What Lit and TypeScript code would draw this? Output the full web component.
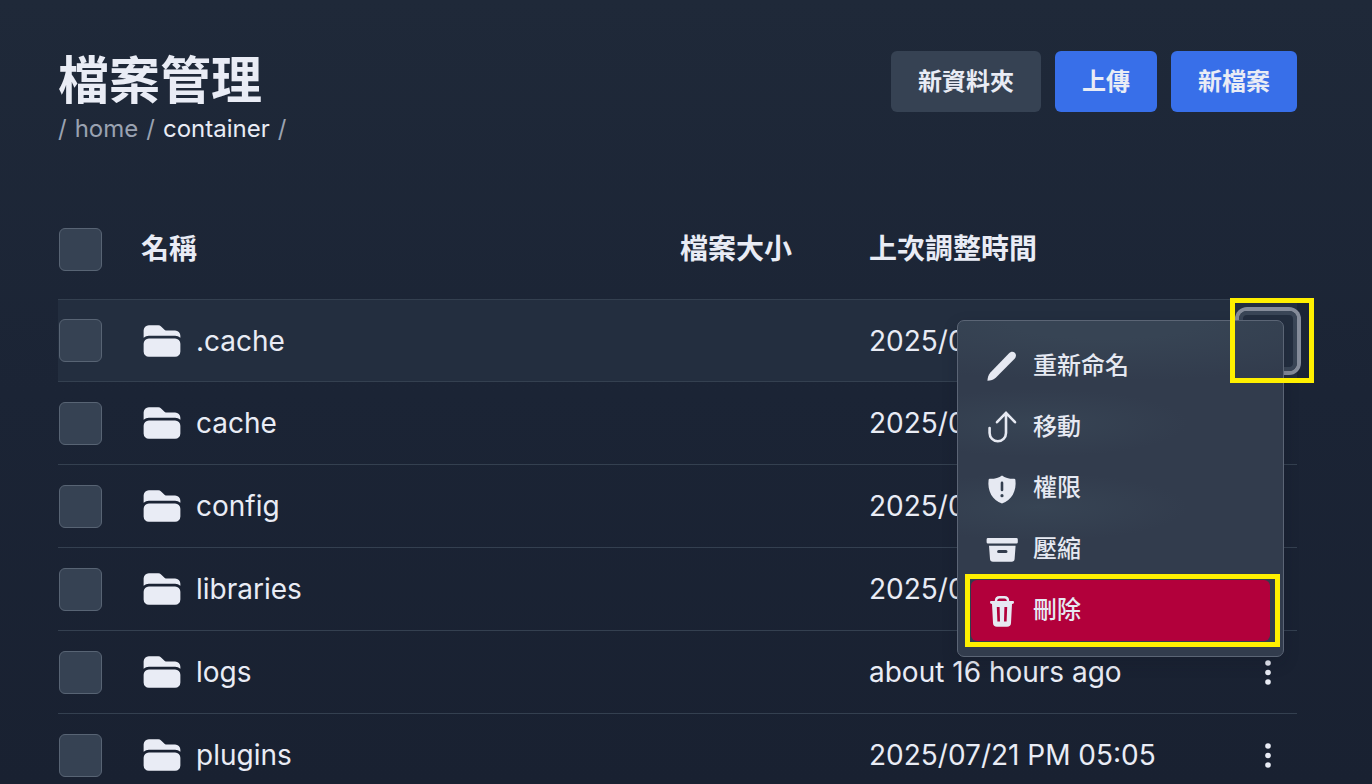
import { LitElement, html, css, svg } from "lit";
import { customElement, property } from "lit/decorators.js";
import { classMap } from "lit/directives/class-map.js";

interface FileEntry {
  name: string;
  size: string;
  modified: string;
}

interface MenuEntry {
  icon: string;
  label: string;
  danger?: boolean;
}

const FILES: FileEntry[] = [
  { name: ".cache", size: "", modified: "2025/0" },
  { name: "cache", size: "", modified: "2025/0" },
  { name: "config", size: "", modified: "2025/0" },
  { name: "libraries", size: "", modified: "2025/0" },
  { name: "logs", size: "", modified: "about 16 hours ago" },
  { name: "plugins", size: "", modified: "2025/07/21 PM 05:05" },
];

const MENU: MenuEntry[] = [
  { icon: "pencil", label: "重新命名" },
  { icon: "move", label: "移動" },
  { icon: "shield", label: "權限" },
  { icon: "archive", label: "壓縮" },
  { icon: "trash", label: "刪除", danger: true },
];

const GLYPHS: Record<string, unknown> = {
  pencil: svg`<path fill="currentColor" d="M3.4 31.8C3.6 28.8 4.2 25.8 6.4 23.4L24.8 4.4C26.8 2.4 29.2 2.4 30.8 3.8C32.4 5.4 32.4 7.8 30.6 9.8L12 28.4C9.6 30.6 6.6 31.6 3.4 31.8Z"/>`,
  move: svg`<path fill="none" stroke="currentColor" stroke-width="2.6" stroke-linecap="round" stroke-linejoin="round" d="M13 12.2L22 2.8L31 12.2M22 2.8V23A8.2 8.2 0 0 1 5.6 23V18"/>`,
  shield: svg`<path fill="currentColor" fill-rule="evenodd" d="M18 4.4C21 6.6 25.6 8 30.2 7.8Q31.2 7.8 31.4 8.8C32.8 20 27.6 29.4 18 32.4C8.4 29.4 3.2 20 4.6 8.8Q4.8 7.8 5.8 7.8C10.4 8 15 6.6 18 4.4ZM18 10.6A1.3 1.3 0 0 0 16.7 11.9V19A1.3 1.3 0 0 0 19.3 19V11.9A1.3 1.3 0 0 0 18 10.6ZM18 23.1A1.6 1.6 0 1 0 18 26.3A1.6 1.6 0 1 0 18 23.1Z"/>`,
  archive: svg`<path fill="currentColor" fill-rule="evenodd" d="M4 6H32.4Q33.8 6 33.8 7.4V10.2Q33.8 11.6 32.4 11.6H4Q2.6 11.6 2.6 10.2V7.4Q2.6 6 4 6ZM5 13.8H31.6L30.6 27Q30.4 29.8 27.6 29.8H9Q6.2 29.8 6 27ZM14.6 18A1.5 1.5 0 0 0 14.6 21H22A1.5 1.5 0 0 0 22 18Z"/>`,
  trash: svg`<path fill="none" stroke="currentColor" stroke-width="2.4" d="M12 9V8Q12 4.2 15.6 4.2H20.4Q24 4.2 24 8V9"/><path fill="currentColor" fill-rule="evenodd" d="M7 8H29Q30 8 30 9.2Q30 10.6 29 10.8L28 11L27 30Q26.8 33.8 23 33.8H13Q9.2 33.8 9 30L8 11L7 10.8Q6 10.6 6 9.2Q6 8 7 8ZM12.8 14L13.4 28.6H16L15.6 14ZM20.4 14L20 28.6H22.6L23.2 14Z"/>`,
};

@customElement("action-icon")
class ActionIcon extends LitElement {
  @property() name = "";

  static styles = css`
    :host {
      display: flex;
      flex: none;
    }
    .glyph {
      width: 35px;
      height: 35px;
    }
  `;

  render() {
    return html`<svg class="glyph" viewBox="0 0 35 35" aria-hidden="true">${GLYPHS[this.name]}</svg>`;
  }
}

@customElement("context-menu")
class ContextMenu extends LitElement {
  static styles = css`
    :host {
      display: block;
      box-sizing: border-box;
      width: 327px;
      padding: 15px 13px;
      border: 1px solid #5b6575;
      border-radius: 7px;
      background:
        radial-gradient(ellipse 320px 60px at 45% 0, #374454 30%, transparent),
        radial-gradient(ellipse 150px 34px at 80px 102px, #374454, transparent),
        radial-gradient(ellipse 150px 34px at 80px 186px, #374454, transparent),
        #323c4d;
      box-shadow: 0 6px 16px rgba(14, 20, 34, 0.2);
    }
    .item {
      display: flex;
      align-items: center;
      gap: 14px;
      width: 100%;
      height: 61px;
      padding: 0 13px;
      border: 0;
      border-radius: 6px;
      background: none;
      color: #e6e9f2;
      font: 500 24px/32px Inter, "Noto Sans CJK TC", sans-serif;
      text-align: left;
      cursor: pointer;
    }
    .danger {
      background: #b2003b;
    }
    .wrap {
      position: relative;
    }
    .mark {
      position: absolute;
      inset: -6px -10px -6px -6px;
      border: 5px solid #fff000;
      pointer-events: none;
    }
  `;

  render() {
    return html`<div role="menu">
      ${MENU.map(
        (m) => html`<div class="wrap">
          <button type="button" role="menuitem" class=${classMap({ item: true, danger: !!m.danger })}>
            <action-icon name=${m.icon}></action-icon>
            <span>${m.label}</span>
          </button>
          ${m.danger ? html`<span class="mark"></span>` : ""}
        </div>`
      )}
    </div>`;
  }
}

@customElement("app-root")
class AppRoot extends LitElement {
  static styles = css`
    :host {
      display: block;
      box-sizing: border-box;
      height: 100vh;
      overflow: hidden auto;
      scrollbar-width: none;
      padding: 51px 75px 0 58px;
      background: linear-gradient(#1f2939, #1b2435 50%, #192131);
      color: #e9ecf5;
      font: 400 28px/36px Inter, "Noto Sans CJK TC", sans-serif;
    }
    .top {
      display: flex;
      justify-content: space-between;
      align-items: flex-start;
    }
    .title {
      margin: 0;
      font-size: 51px;
      line-height: 60px;
      font-weight: 700;
    }
    .crumbs {
      display: flex;
      gap: 8px;
      font-size: 24px;
      line-height: 36px;
      color: #9aa2b1;
    }
    .crumb {
      color: inherit;
      text-decoration: none;
    }
    .current {
      color: #e9ecf5;
    }
    .actions {
      display: flex;
      gap: 14px;
    }
    .btn {
      height: 61px;
      padding: 0 27px;
      border: 0;
      border-radius: 6px;
      background: #386fe9;
      color: #e9ecf5;
      font: 700 24px/36px Inter, "Noto Sans CJK TC", sans-serif;
      cursor: pointer;
    }
    .quiet {
      background: #364253;
    }
    .files {
      width: 100%;
      margin-top: 52px;
      border-collapse: separate;
      border-spacing: 0;
      table-layout: fixed;
    }
    .pick {
      width: 83px;
    }
    .size {
      width: 189px;
    }
    .date {
      width: 345px;
    }
    .more {
      width: 83px;
    }
    th,
    td {
      height: 82px;
      padding: 0;
      border-bottom: 1px solid #344050;
      text-align: left;
      vertical-align: middle;
      white-space: nowrap;
    }
    th {
      height: 100px;
      font-weight: 700;
    }
    .active td {
      height: 81px;
      background: #232e3f;
    }
    .box {
      display: block;
      appearance: none;
      width: 43px;
      height: 43px;
      margin: 0 0 0 1px;
      border: 1px solid #586474;
      border-radius: 6px;
      background: #364253;
    }
    .file {
      display: flex;
      align-items: center;
      gap: 13px;
    }
    .folder {
      flex: none;
      width: 42px;
      height: 42px;
    }
    .slot {
      position: relative;
      display: flex;
      justify-content: flex-end;
    }
    .dots {
      display: flex;
      align-items: center;
      justify-content: center;
      width: 58px;
      height: 60px;
      padding: 0;
      border: 0;
      border-radius: 8px;
      background: none;
      color: #e9ecf5;
      cursor: pointer;
    }
    .active .dots {
      border: 4px solid #3a4657;
      box-shadow: 0 0 0 4px #858c9a;
    }
    .kebab {
      width: 6px;
      height: 25px;
    }
    .menu {
      position: absolute;
      z-index: 2;
      top: 9px;
      right: 13px;
    }
    .mark {
      position: absolute;
      z-index: 3;
      top: -13px;
      right: -17px;
      box-sizing: border-box;
      width: 84px;
      height: 85px;
      border: 5px solid #fff000;
      pointer-events: none;
    }
  `;

  private row(file: FileEntry, index: number) {
    const active = index === 0;
    return html`<tr class=${classMap({ active })}>
      <td><input class="box" type="checkbox" aria-label=${file.name} /></td>
      <td>
        <div class="file">
          <svg class="folder" viewBox="0 0 24 24" fill="currentColor" aria-hidden="true">
            <path d="M19.5 21a3 3 0 0 0 3-3v-4.5a3 3 0 0 0-3-3h-15a3 3 0 0 0-3 3V18a3 3 0 0 0 3 3h15ZM1.5 10.146V6a3 3 0 0 1 3-3h5.379a2.25 2.25 0 0 1 1.59.659l2.122 2.121c.14.141.331.22.53.22H19.5a3 3 0 0 1 3 3v1.146A4.483 4.483 0 0 0 19.5 9h-15a4.483 4.483 0 0 0-3 1.146Z" />
          </svg>
          <span>${file.name}</span>
        </div>
      </td>
      <td>${file.size}</td>
      <td>${file.modified}</td>
      <td>
        <div class="slot">
          <button class="dots" type="button" aria-label="選單">
            <svg class="kebab" viewBox="0 0 6 25" fill="currentColor" aria-hidden="true">
              <circle cx="3" cy="3" r="2.8" />
              <circle cx="3" cy="12.5" r="2.8" />
              <circle cx="3" cy="22" r="2.8" />
            </svg>
          </button>
          ${active ? html`<context-menu class="menu"></context-menu><span class="mark"></span>` : ""}
        </div>
      </td>
    </tr>`;
  }

  render() {
    return html`
      <header class="top">
        <div>
          <h1 class="title">檔案管理</h1>
          <nav class="crumbs">
            <span>/</span><a class="crumb" href="#home">home</a><span>/</span
            ><a class="crumb current" href="#container">container</a><span>/</span>
          </nav>
        </div>
        <div class="actions">
          <button class="btn quiet" type="button">新資料夾</button>
          <button class="btn" type="button">上傳</button>
          <button class="btn" type="button">新檔案</button>
        </div>
      </header>
      <table class="files">
        <thead>
          <tr>
            <th class="pick"><input class="box" type="checkbox" aria-label="全選" /></th>
            <th>名稱</th>
            <th class="size">檔案大小</th>
            <th class="date">上次調整時間</th>
            <th class="more"></th>
          </tr>
        </thead>
        <tbody>
          ${FILES.map((f, i) => this.row(f, i))}
        </tbody>
      </table>
    `;
  }
}
